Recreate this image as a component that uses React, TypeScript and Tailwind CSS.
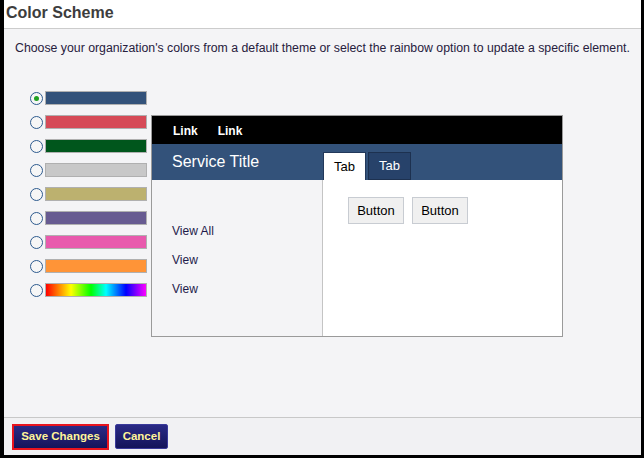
const swatches = [
  'bg-[#33527a]',
  'bg-[#d64a57]',
  'bg-[#00561c]',
  'bg-[#c8c8c8]',
  'bg-[#bcb16f]',
  'bg-[#675b91]',
  'bg-[#e85aad]',
  'bg-[#ff9437]',
  'bg-[linear-gradient(to_right,#ff0000,#ffff00_25%,#00ff00_45%,#00ffff_60%,#0000ff_80%,#ff00ff)]',
];

function Radio({ checked }: { checked?: boolean }) {
  return (
    <span className="w-[13px] h-[13px] rounded-full border border-[#2d5a8e] bg-[#f6f6f6] flex items-center justify-center shrink-0">
      {checked && <span className="w-[5px] h-[5px] rounded-full bg-[#1fa020]" />}
    </span>
  );
}

function Preview() {
  return (
    <div className="mt-[24px] ml-[4px] w-[412px] h-[222px] border border-[#9a9a9a] flex flex-col bg-white">
      <div className="h-[28px] bg-black flex items-center gap-[20px] pl-[21px] pt-[1px] text-white text-[12px] font-bold">
        <span>Link</span>
        <span>Link</span>
      </div>
      <div className="h-[36px] bg-[#33527a] flex">
        <div className="w-[171px] pl-[20px] pt-[6px] text-white text-[16px]">Service Title</div>
        <div className="flex items-end gap-[2px]">
          <div className="w-[43px] h-[28px] bg-white border-t border-x border-[#22385a] flex items-center justify-center text-[13px] text-black">
            Tab
          </div>
          <div className="w-[43px] h-[28px] bg-[#27426a] border border-[#1d3150] flex items-center justify-center text-[13px] text-white">
            Tab
          </div>
        </div>
      </div>
      <div className="flex-1 flex">
        <div className="w-[171px] bg-[#f4f4f6] border-r border-[#c4c4c4] pl-[20px] pt-[44px] flex flex-col gap-[14px] text-[12px] text-[#1e1a4a]">
          <span className="leading-[15px]">View All</span>
          <span className="leading-[15px]">View</span>
          <span className="leading-[15px]">View</span>
        </div>
        <div className="flex-1 pl-[25px] pt-[17px] flex items-start gap-[8px]">
          <span className="w-[56px] h-[27px] bg-[#f0f0f0] border border-[#c8ccd2] flex items-center justify-center text-[13px] text-black">
            Button
          </span>
          <span className="w-[56px] h-[27px] bg-[#f0f0f0] border border-[#c8ccd2] flex items-center justify-center text-[13px] text-black">
            Button
          </span>
        </div>
      </div>
    </div>
  );
}

export default function App() {
  return (
    <div className="w-[644px] h-[458px] bg-black pl-[4px] pr-[3px] pb-[3px] font-['Liberation_Sans',Arial,sans-serif]">
      <div className="h-full flex flex-col bg-[#f4f4f6]">
        {/* Header */}
        <div className="h-[29px] bg-white border-b border-[#cccccc] pl-[2px] flex items-center">
          <h1 className="text-[16px] font-bold text-[#3d3d3d] leading-none -mt-[2px]">Color Scheme</h1>
        </div>

        {/* Body */}
        <div className="flex-1 px-[11px] pt-[12px]">
          <p className="text-[12.3px] text-[#27203d] leading-[15px] whitespace-nowrap">
            Choose your organization's colors from a default theme or select the rainbow option to update a specific element.
          </p>
          <div className="flex mt-[35px] ml-[15px]">
            <div className="flex flex-col gap-[10px]">
              {swatches.map((cls, i) => (
                <div key={i} className="flex items-center gap-[2px] h-[14px]">
                  <Radio checked={i === 0} />
                  <span className={`w-[102px] h-[14px] border border-[#b0b0b0] ${cls}`} />
                </div>
              ))}
            </div>
            <Preview />
          </div>
        </div>

        {/* Footer */}
        <div className="h-[38px] border-t border-[#c8c8c8] bg-[#f1f1f3] flex items-center gap-[6px] pl-[8px]">
          <button className="h-[26px] w-[97px] bg-gradient-to-b from-[#2a2a86] to-[#14145a] border-2 border-[#e8141e] text-[#fff59a] text-[11.5px] font-bold">
            Save Changes
          </button>
          <button className="h-[25px] w-[53px] bg-gradient-to-b from-[#2a2a86] to-[#14145a] border border-[#3a3a9a] text-[#fff59a] text-[11.5px] font-bold rounded-[2px]">
            Cancel
          </button>
        </div>
      </div>
    </div>
  );
}
